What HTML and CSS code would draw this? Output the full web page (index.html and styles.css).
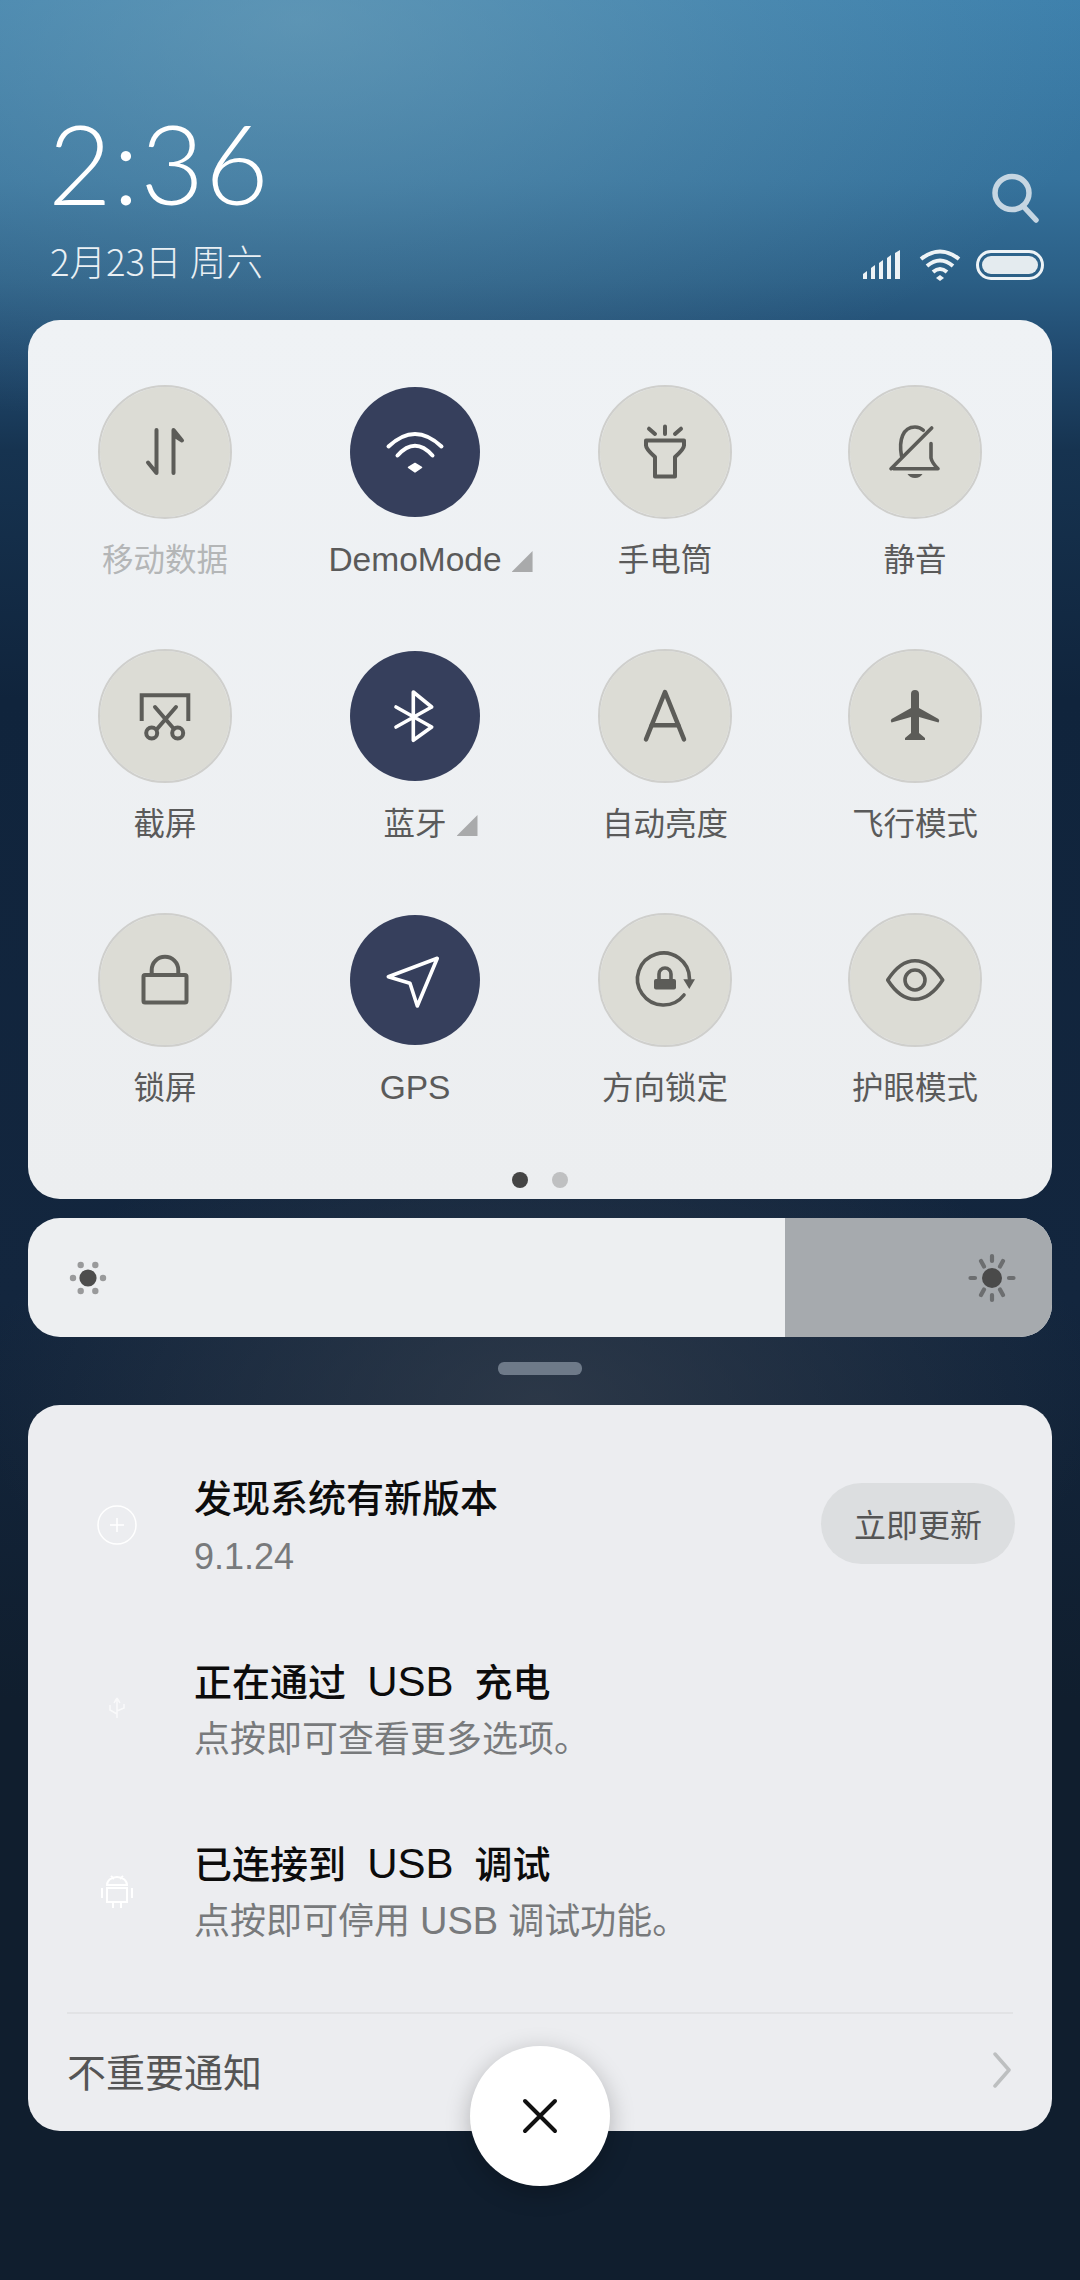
FILE: index.html
```html
<!DOCTYPE html>
<html lang="zh-CN">

<head>
    <meta charset="UTF-8">
    <meta name="viewport" content="width=device-width, initial-scale=1.0">
    <title>控制中心</title>
    <link rel="stylesheet" href="styles.css">
</head>

<body>
    <header class="header">
        <div class="clock">
            <div class="time">2:36</div>
            <div class="date">2月23日 周六</div>
        </div>
        <div class="header-right">
            <svg class="search" viewBox="0 0 50 50" fill="none" stroke="#c6d6e2" stroke-width="5.5" stroke-linecap="round">
                <ellipse cx="20" cy="20" rx="17" ry="16.5" />
                <path d="M31 33L44 47" />
            </svg>
            <div class="status">
                <svg class="signal" viewBox="0 0 42 30" fill="#eef3f6">
                    <path d="M1 24L5 21V29H1Z" />
                    <path d="M9 18L13 15V29H9Z" />
                    <path d="M17 13L21 10V29H17Z" />
                    <path d="M25 8L29 5V29H25Z" />
                    <path d="M33 3L38 0V29H33Z" />
                </svg>
                <svg class="wifi-small" viewBox="0 0 42 32" fill="none" stroke="#eef3f6" stroke-width="4">
                    <path d="M2 10Q21 -5 40 10" />
                    <path d="M8 17Q21 6 34 17" />
                    <path d="M14 23Q21 17 28 23" />
                    <path d="M21 26L25 29L21 32L17 29Z" fill="#eef3f6" stroke="none" />
                </svg>
                <div class="battery"><div class="battery-fill"></div></div>
            </div>
        </div>
    </header>

    <section class="card toggles">
        <div class="grid">
            <div class="item">
                <div class="tile">
                    <svg viewBox="0 0 100 100" fill="none" stroke="#5c5c58" stroke-width="4" stroke-linecap="round" stroke-linejoin="round">
                        <path d="M41.500 28V71L33 60.500" />
                        <path d="M58.500 71V28L67 38.500L58.500 33" />
                    </svg>
                </div>
                <div class="label off">移动数据</div>
            </div>
            <div class="item">
                <div class="tile on">
                    <svg viewBox="0 0 100 100" fill="none" stroke="#fff" stroke-width="4" stroke-linecap="round">
                        <path d="M23.500 44.500Q50 19.500 76.500 44.500" />
                        <path d="M32.500 53.500Q50 34 67.500 53.500" />
                        <path d="M43.500 65.500L50 61.500L56.500 65.500L50 70Z" fill="#fff" stroke="#fff" stroke-width="1.500" stroke-linejoin="round" />
                    </svg>
                </div>
                <div class="label"><span class="tri-text latin">DemoMode<i class="tri"></i></span></div>
            </div>
            <div class="item">
                <div class="tile">
                    <svg viewBox="0 0 100 100" fill="none" stroke="#5c5c58" stroke-width="4" stroke-linecap="round" stroke-linejoin="round">
                        <path d="M50 24.500V32M34 26.700L40 32M66 26.700L60 32" />
                        <path d="M31 38.500H69V43.500Q69 47 60 55V74.500H40V55Q31 47 31 43.500Z" />
                    </svg>
                </div>
                <div class="label">手电筒</div>
            </div>
            <div class="item">
                <div class="tile">
                    <svg viewBox="0 0 100 100" fill="none" stroke="#5c5c58" stroke-width="3.600" stroke-linecap="round" stroke-linejoin="round">
                        <path d="M28.500 66.700H73Q67 61 66 56V41.500" />
                        <path d="M36.500 54C33.500 38 38 25 50 25Q55 25 58.300 28.300" />
                        <path d="M66.700 26L26 66.700" />
                        <path d="M42.500 72H57.500Q55 76 50 76Q45 76 42.500 72Z" fill="#5c5c58" stroke="none" />
                    </svg>
                </div>
                <div class="label">静音</div>
            </div>

            <div class="item">
                <div class="tile">
                    <svg viewBox="0 0 100 100" fill="none" stroke="#5c5c58" stroke-width="4" stroke-linecap="round">
                        <path d="M26.700 55V29.300H73.300V55" stroke-linecap="butt" />
                        <path d="M40 41L59 63M61 41L42 63" />
                        <circle cx="36.700" cy="67" r="5.500" />
                        <circle cx="62.700" cy="67" r="5.500" />
                    </svg>
                </div>
                <div class="label">截屏</div>
            </div>
            <div class="item">
                <div class="tile on">
                    <svg viewBox="0 0 100 100" fill="none" stroke="#fff" stroke-width="3.600" stroke-linecap="round" stroke-linejoin="round">
                        <path d="M31 41L66.700 61L48.300 74.300V26L66.700 41L31 61" />
                    </svg>
                </div>
                <div class="label"><span class="tri-text">蓝牙<i class="tri"></i></span></div>
            </div>
            <div class="item">
                <div class="tile">
                    <svg viewBox="0 0 100 100" fill="none" stroke="#5c5c58" stroke-width="4.500" stroke-linecap="round" stroke-linejoin="round">
                        <path d="M31 73.300L50 26L69 73.300" />
                        <path d="M36.700 59.300H63.300" />
                    </svg>
                </div>
                <div class="label">自动亮度</div>
            </div>
            <div class="item">
                <div class="tile">
                    <svg viewBox="0 0 100 100" fill="#5c5c58">
                        <path d="M46 28Q46 24 50 24Q54 24 54 28V42L73.500 53Q75 54.500 73.500 56.500L54 51V67L60 72V74H40V72L46 67V51L26.500 56.500Q25 54.500 26.500 53L46 42Z" />
                    </svg>
                </div>
                <div class="label">飞行模式</div>
            </div>

            <div class="item">
                <div class="tile">
                    <svg viewBox="0 0 100 100" fill="none" stroke="#5f5f5a" stroke-width="4" stroke-linejoin="round">
                        <rect x="28.500" y="45" width="43" height="27.500" rx="1.500" />
                        <path d="M36.700 45V40a13.300 13.300 0 0 1 26.600 0V45" />
                    </svg>
                </div>
                <div class="label">锁屏</div>
            </div>
            <div class="item">
                <div class="tile on">
                    <svg viewBox="0 0 100 100" fill="none" stroke="#fff" stroke-width="3.600" stroke-linejoin="round">
                        <path d="M72.300 28.300L23.300 46.700L45 53.300L52.300 76Z" />
                    </svg>
                </div>
                <div class="label"><span class="latin">GPS</span></div>
            </div>
            <div class="item">
                <div class="tile">
                    <svg viewBox="0 0 100 100" fill="none" stroke="#5c5c58" stroke-width="3.600" stroke-linecap="round">
                        <path d="M69 65A26 26 0 1 1 74.500 49" />
                        <path d="M68.300 49.300H80L74.300 59Z" fill="#5c5c58" stroke="none" />
                        <rect x="39" y="49" width="22" height="10.500" rx="2" fill="#5c5c58" stroke="none" />
                        <path d="M44 49V44a6 6 0 0 1 12 0V49" />
                    </svg>
                </div>
                <div class="label">方向锁定</div>
            </div>
            <div class="item">
                <div class="tile">
                    <svg viewBox="0 0 100 100" fill="none" stroke="#5c5c58" stroke-width="3.600" stroke-linejoin="round">
                        <path d="M22.700 50Q35 30.700 50 30.700Q65 30.700 77.700 50Q65 69.300 50 69.300Q35 69.300 22.700 50Z" />
                        <circle cx="50" cy="50" r="10" />
                    </svg>
                </div>
                <div class="label">护眼模式</div>
            </div>
        </div>
        <div class="dots">
            <span class="dot active"></span>
            <span class="dot"></span>
        </div>
    </section>

    <section class="card brightness">
        <svg class="sun" viewBox="0 0 40 40" fill="#999a9b">
            <circle cx="20" cy="20" r="8.600" fill="#4d4d4d" />
            <circle cx="5" cy="20" r="3.200" />
            <circle cx="35" cy="20" r="3.200" />
            <circle cx="12.700" cy="7" r="3.200" />
            <circle cx="27.300" cy="7" r="3.200" />
            <circle cx="12.700" cy="33" r="3.200" />
            <circle cx="27.300" cy="33" r="3.200" />
        </svg>
        <div class="slider-rest">
            <svg class="sun sun-big" viewBox="0 0 50 50" fill="none" stroke="#6c6e70" stroke-width="4.200" stroke-linecap="round">
                <circle cx="25" cy="25" r="10" fill="#4a4a4a" stroke="none" />
                <path d="M25 3V8M25 42V47M3.500 25H8M42 25H46.500M14 8L17 13.500M36 8L33 13.500M14 42L17 36.500M36 42L33 36.500" />
            </svg>
        </div>
    </section>

    <div class="handle"></div>

    <section class="card notices">
        <div class="notice">
            <div class="notice-icon">
                <svg viewBox="0 0 60 60" fill="none" stroke="#fff" stroke-width="1.500">
                    <circle cx="30" cy="30" r="19" />
                    <path d="M30 23V37M23 30H37" />
                </svg>
            </div>
            <div class="notice-text">
                <div class="notice-title">发现系统有新版本</div>
                <div class="notice-sub version">9.1.24</div>
            </div>
            <div class="update-btn">立即更新</div>
        </div>
        <div class="notice">
            <div class="notice-icon">
                <svg viewBox="0 0 60 60" fill="none" stroke="#fff" stroke-width="1.500" opacity="0.7">
                    <path d="M30 20V40M30 20L27 25M30 20L33 25M23 27V32L30 36M37 26V30L30 33" />
                </svg>
            </div>
            <div class="notice-text">
                <div class="notice-title">正在通过  <span class="usb">USB</span>  充电</div>
                <div class="notice-sub">点按即可查看更多选项。</div>
            </div>
        </div>
        <div class="notice">
            <div class="notice-icon">
                <svg viewBox="0 0 60 60" fill="none" stroke="#fff" stroke-width="2">
                    <path d="M20 25a10 8 0 0 1 20 0ZM20 28H40V42H20ZM15 28V38M45 28V38M26 42V48M34 42V48M24 16L27 19M36 16L33 19" />
                </svg>
            </div>
            <div class="notice-text">
                <div class="notice-title">已连接到  <span class="usb">USB</span>  调试</div>
                <div class="notice-sub">点按即可停用 <span class="usb-sub">USB</span> 调试功能。</div>
            </div>
        </div>
        <div class="more">
            <span class="more-text">不重要通知</span>
            <svg class="chevron" viewBox="0 0 20 36" fill="none" stroke="#bdbfc0" stroke-width="3.500" stroke-linecap="round" stroke-linejoin="round">
                <path d="M3 2L17 18L3 34" />
            </svg>
        </div>
    </section>

    <div class="close">
        <svg viewBox="0 0 40 40" fill="none" stroke="#111" stroke-width="4" stroke-linecap="round">
            <path d="M5 5L35 35M35 5L5 35" />
        </svg>
    </div>
</body>

</html>
```

FILE: styles.css
```css
html,
body {
    margin: 0;
    padding: 0;
}

body {
    position: relative;
    width: 1080px;
    height: 2280px;
    box-sizing: border-box;
    padding: 0 28px;
    overflow: hidden;
    font-family: "Noto Sans CJK SC", "Liberation Sans", sans-serif;
    background-color: #101e2e;
    background-image:
        radial-gradient(ellipse 560px 300px at 540px 1400px, rgba(52, 62, 76, 0.75), rgba(52, 62, 76, 0)),
        radial-gradient(ellipse 820px 420px at 300px 20px, rgba(125, 170, 190, 0.5), rgba(125, 170, 190, 0.2) 55%, rgba(125, 170, 190, 0)),
        linear-gradient(180deg, #3d80ac 0, #35729c 180px, #2b5f86 280px, #214b70 350px, #163350 450px, #10243c 700px, #13263e 1300px, #101e2e 1700px);
}

/* 顶部时间 */
.header {
    display: flex;
    justify-content: space-between;
    height: 320px;
    box-sizing: border-box;
    padding: 91px 8px 0 22px;
    color: #fff;
}

.time {
    height: 142px;
    margin-left: -2px;
    font-family: Lato, sans-serif;
    font-size: 110px;
    font-weight: 300;
    line-height: 142px;
    letter-spacing: 1px;
}

.date {
    margin-top: 6px;
    font-size: 36.5px;
    font-weight: 300;
    line-height: 44px;
    color: #eaf0f4;
}

.header-right {
    display: flex;
    flex-direction: column;
    align-items: flex-end;
}

.search {
    width: 50px;
    height: 50px;
    margin-top: 82px;
    margin-right: 2px;
}

.status {
    display: flex;
    align-items: center;
    gap: 15px;
    margin-top: 26px;
}

.signal {
    width: 42px;
    height: 30px;
}

.wifi-small {
    width: 42px;
    height: 32px;
}

.battery {
    width: 68px;
    height: 30px;
    box-sizing: border-box;
    padding: 3px;
    border: 3px solid #eef3f6;
    border-radius: 15px;
}

.battery-fill {
    height: 100%;
    border-radius: 9px;
    background: #e4ebef;
}

/* 卡片 */
.card {
    border-radius: 32px;
    background: #eef0f3;
}

.toggles {
    height: 879px;
    box-sizing: border-box;
    padding: 65px 12px 0;
    background: linear-gradient(180deg, #eff2f5, #eceef0);
}

.grid {
    display: grid;
    grid-template-columns: repeat(4, 250px);
    grid-auto-rows: 264px;
}

.item {
    display: flex;
    flex-direction: column;
    align-items: center;
}

.tile {
    display: flex;
    align-items: center;
    justify-content: center;
    width: 134px;
    height: 134px;
    box-sizing: border-box;
    border: 2px solid #cfcfcc;
    border-radius: 50%;
    background: #dcdcd5;
    background-clip: padding-box;
}

.tile.on {
    border-color: transparent;
    background-color: #363f5c;
}

.tile svg {
    flex: none;
    width: 100px;
    height: 100px;
}

.label {
    height: 42px;
    margin-top: 20px;
    font-size: 31.5px;
    line-height: 42px;
    color: #5a5a5a;
    font-family: "Liberation Sans", "Noto Sans CJK SC", sans-serif;
}

.label.off {
    color: #b4b6b7;
}

.latin {
    font-size: 33.5px;
}

.tri-text {
    position: relative;
    display: inline-block;
}

.tri {
    position: absolute;
    left: 100%;
    bottom: 9px;
    width: 21px;
    height: 21px;
    margin-left: 10px;
    background: #a9aaab;
    clip-path: polygon(100% 0, 100% 100%, 0 100%);
}

.dots {
    display: flex;
    justify-content: center;
    gap: 24px;
    margin-top: -5px;
}

.dot {
    width: 16px;
    height: 16px;
    border-radius: 50%;
    background: #bfc0c1;
}

.dot.active {
    background: #444;
}

/* 亮度条 */
.brightness {
    display: flex;
    align-items: center;
    justify-content: space-between;
    height: 119px;
    margin-top: 19px;
    padding-left: 40px;
    overflow: hidden;
    background: #edeff1;
}

.sun {
    width: 40px;
    height: 40px;
}

.slider-rest {
    display: flex;
    align-items: center;
    justify-content: flex-end;
    width: 267px;
    height: 100%;
    box-sizing: border-box;
    padding-right: 35px;
    background: #a6aaae;
}

.sun-big {
    width: 50px;
    height: 50px;
}

.handle {
    width: 84px;
    height: 13px;
    margin: 25px auto 30px;
    border-radius: 6px;
    background: #6e7a89;
}

/* 通知 */
.notices {
    height: 726px;
    box-sizing: border-box;
    padding-top: 62px;
    background: #ecedf0;
}

.notice {
    display: flex;
    align-items: center;
    padding-right: 37px;
}

.notice + .notice {
    margin-top: 65px;
}

.notice-icon {
    display: flex;
    flex: none;
    justify-content: center;
    width: 60px;
    height: 60px;
    margin: 0 47px 3px 59px;
}

.notice-icon svg {
    width: 60px;
    height: 60px;
}

.notice-text {
    flex: 1;
    padding-top: 3px;
}

.notice-title {
    height: 58px;
    font-size: 38px;
    font-weight: 500;
    line-height: 58px;
    color: #0c0c0c;
    white-space: pre;
    font-family: "Liberation Sans", "Noto Sans CJK SC", sans-serif;
}

.usb {
    font-size: 42px;
    font-weight: 400;
    line-height: 1;
}

.notice-sub {
    height: 56px;
    font-size: 36px;
    line-height: 56px;
    color: #787a7c;
    font-family: "Liberation Sans", "Noto Sans CJK SC", sans-serif;
}

.usb-sub {
    font-size: 38px;
    line-height: 1;
}

.version {
    height: 58px;
    line-height: 58px;
}

.update-btn {
    width: 194px;
    height: 81px;
    margin-bottom: 6px;
    border-radius: 41px;
    background: #dcdee0;
    font-size: 32px;
    line-height: 81px;
    text-align: center;
    color: #555;
}

.more {
    display: flex;
    align-items: center;
    justify-content: space-between;
    height: 118px;
    box-sizing: border-box;
    margin: 62px 39px 0;
    padding-bottom: 4px;
    border-top: 2px solid #e2e3e5;
}

.more-text {
    font-size: 39px;
    color: #555;
}

.chevron {
    width: 20px;
    height: 36px;
    margin-right: 1px;
}

/* 关闭按钮 */
.close {
    position: absolute;
    left: 470px;
    top: 2046px;
    display: flex;
    align-items: center;
    justify-content: center;
    width: 140px;
    height: 140px;
    border-radius: 50%;
    background: #fff;
    box-shadow: 0 6px 24px rgba(0, 0, 0, 0.25);
}

.close svg {
    width: 40px;
    height: 40px;
}
```
